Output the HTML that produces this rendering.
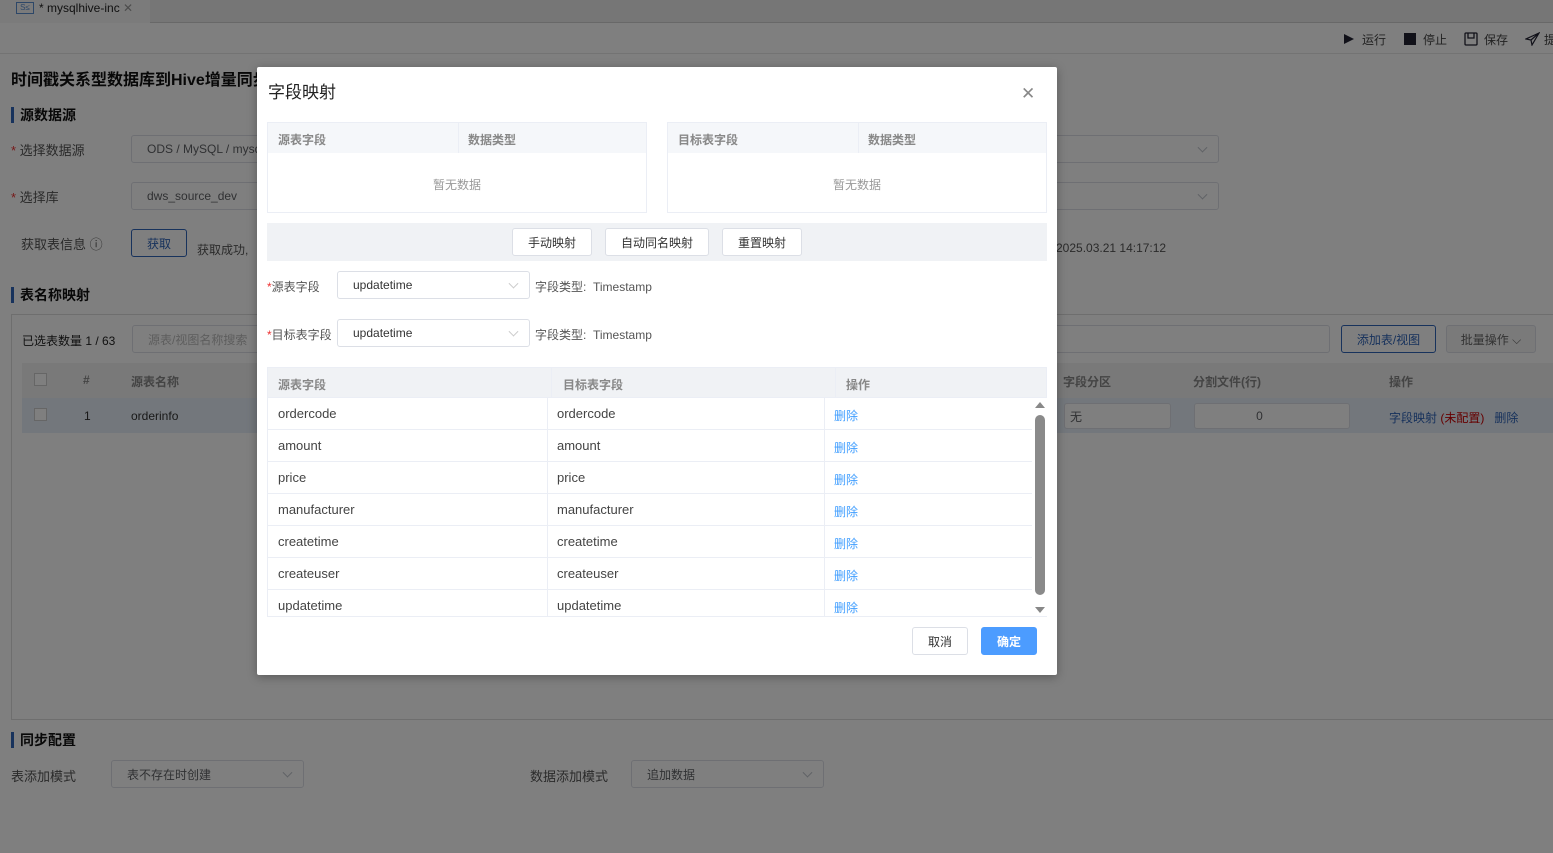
<!DOCTYPE html>
<html><head><meta charset="utf-8"><style>
*{box-sizing:border-box;margin:0;padding:0}
body{width:1553px;height:853px;overflow:hidden;position:relative;background:#fff;font-family:"Liberation Sans","Noto Sans CJK SC",sans-serif;font-size:13px;color:#333}
.a{position:absolute}
.inp{position:absolute;border:1px solid #dcdfe6;border-radius:3px;background:#fff;font-size:12px;color:#606266;padding-left:15px;display:flex;align-items:center}
.chev{position:absolute;right:12px;top:50%;width:7px;height:7px;border-right:1px solid #c0c4cc;border-bottom:1px solid #c0c4cc;transform:translateY(-70%) rotate(45deg)}
.sec{position:absolute;left:11px;border-left:3px solid #2f64b8;padding-left:6px;font-weight:bold;font-size:14px;color:#111;line-height:16px}
.lbl{position:absolute;font-size:13px;color:#555}
.ov{position:absolute;left:0;top:0;width:1553px;height:853px;background:rgba(0,0,0,.5)}
.m{position:absolute;left:257px;top:67px;width:800px;height:608px;background:#fff;border-radius:2px;box-shadow:0 2px 10px rgba(0,0,0,.3)}
.hd{background:#f5f7fa;color:#888;font-weight:bold;font-size:12px}
.btn{position:absolute;border:1px solid #dcdfe6;background:#fff;border-radius:3px;font-size:12px;color:#333;display:flex;align-items:center;justify-content:center}
.row{position:absolute;left:10px;width:765px;height:32px;border-bottom:1px solid #ebeef5;font-size:13px;color:#444}
.row span{position:absolute;top:8px}
.del{color:#409eff;font-size:12px}
.tb{position:absolute;top:31px;font-size:12px;color:#444}
</style></head><body>
<div class="a" style="left:0;top:0;width:1553px;height:23px;background:#ececec;border-bottom:1px solid #d0d0d0"></div>
<div class="a" style="left:0;top:0;width:150px;height:23px;background:#f7f7f7"></div>
<div class="a" style="left:16px;top:2px;width:18px;height:12px;border:1px solid #5a8fd0;font-size:8px;color:#5a8fd0;line-height:10px;text-align:center">S≤</div>
<div class="a" style="left:39px;top:1px;font-size:12px;color:#222">* mysqlhive-inc <span style="color:#999">✕</span></div>
<div class="a" style="left:0;top:24px;width:1553px;height:30px;border-bottom:1px solid #e6e6e6"></div>
<div class="a" style="left:1344px;top:34px;width:0;height:0;border-top:5px solid transparent;border-bottom:5px solid transparent;border-left:10px solid #223"></div>
<div class="tb" style="left:1362px">运行</div>
<div class="a" style="left:1404px;top:33px;width:12px;height:12px;background:#223"></div>
<div class="tb" style="left:1423px">停止</div>
<svg class="a" style="left:1464px;top:32px" width="14" height="14" viewBox="0 0 14 14"><rect x="1" y="1" width="12" height="12" rx="1" fill="none" stroke="#223" stroke-width="1.3"/><path d="M4 1v5h6V1" fill="none" stroke="#223" stroke-width="1.3"/></svg>
<div class="tb" style="left:1484px">保存</div>
<svg class="a" style="left:1525px;top:32px" width="15" height="14" viewBox="0 0 15 14"><path d="M14 1L1 7l5 1 1 5z M6 8l8-7" fill="none" stroke="#223" stroke-width="1.2"/></svg>
<div class="tb" style="left:1544px">提</div>
<div class="a" style="left:11px;top:66px;font-size:16px;font-weight:bold;color:#111">时间戳关系型数据库到Hive增量同步</div>
<div class="sec" style="top:107px">源数据源</div>
<div class="lbl" style="left:11px;top:140px"><span style="color:#e33">*</span> 选择数据源</div>
<div class="inp" style="left:131px;top:135px;width:1088px;height:28px">ODS / MySQL / mysql<i class="chev"></i></div>
<div class="lbl" style="left:11px;top:187px"><span style="color:#e33">*</span> 选择库</div>
<div class="inp" style="left:131px;top:182px;width:1088px;height:28px">dws_source_dev<i class="chev"></i></div>
<div class="lbl" style="left:21px;top:234px">获取表信息 ⓘ</div>
<div class="btn" style="left:131px;top:229px;width:56px;height:28px;border-color:#2f64b8;color:#2f64b8">获取</div>
<div class="lbl" style="left:197px;top:241px;font-size:12px">获取成功,</div>
<div class="lbl" style="left:1056px;top:241px;font-size:12px">2025.03.21 14:17:12</div>
<div class="sec" style="top:287px">表名称映射</div>
<div class="a" style="left:11px;top:314px;width:1560px;height:406px;border:1px solid #ddd"></div>
<div class="lbl" style="left:22px;top:332px;font-size:12px;color:#222">已选表数量 1 / 63</div>
<div class="inp" style="left:132px;top:325px;width:1198px;height:28px;color:#bbb">源表/视图名称搜索</div>
<div class="btn" style="left:1341px;top:325px;width:95px;height:28px;border-color:#2f64b8;color:#2f64b8">添加表/视图</div>
<div class="btn" style="left:1446px;top:325px;width:90px;height:28px;color:#666;background:#f5f5f5">批量操作 ⌵</div>
<div class="a hd" style="left:22px;top:363px;width:1540px;height:35px;background:#f2f2f2"></div>
<div class="a" style="left:22px;top:398px;width:1540px;height:35px;background:#e6eef8"></div>
<div class="a" style="left:34px;top:373px;width:13px;height:13px;border:1px solid #ccc;background:#fff"></div>
<div class="a" style="left:34px;top:408px;width:13px;height:13px;border:1px solid #ccc;background:#fff"></div>
<div class="a hd" style="left:83px;top:373px;background:none">#</div>
<div class="a hd" style="left:131px;top:373px;background:none">源表名称</div>
<div class="a" style="left:84px;top:409px;font-size:12px">1</div>
<div class="a" style="left:131px;top:409px;font-size:12px">orderinfo</div>
<div class="a hd" style="left:1063px;top:373px;background:none">字段分区</div>
<div class="a hd" style="left:1193px;top:373px;background:none">分割文件(行)</div>
<div class="a hd" style="left:1389px;top:373px;background:none">操作</div>
<div class="inp" style="left:1064px;top:403px;width:107px;height:26px;padding-left:5px">无</div>
<div class="inp" style="left:1194px;top:403px;width:156px;height:26px;justify-content:center;padding:0 25px 0 0">0</div>
<div class="a" style="left:1389px;top:409px;font-size:12px;color:#2f64b8">字段映射 <span style="color:#c00">(未配置)</span> &nbsp; 删除</div>
<div class="sec" style="top:732px">同步配置</div>
<div class="lbl" style="left:11px;top:766px">表添加模式</div>
<div class="inp" style="left:111px;top:760px;width:193px;height:28px">表不存在时创建<i class="chev"></i></div>
<div class="lbl" style="left:530px;top:766px">数据添加模式</div>
<div class="inp" style="left:631px;top:760px;width:193px;height:28px">追加数据<i class="chev"></i></div>
<div class="ov"></div>
<div class="m">
<div class="a" style="left:11px;top:11px;font-size:17px;color:#222">字段映射</div>
<div class="a" style="left:764px;top:17px;font-size:17px;color:#888">✕</div>
<div class="a" style="left:10px;top:55px;width:380px;height:91px;border:1px solid #ebeef5">
 <div class="hd" style="height:30px;position:relative"><span class="a" style="left:10px;top:8px">源表字段</span><span class="a" style="left:190px;top:0;height:30px;border-left:1px solid #ebeef5"></span><span class="a" style="left:200px;top:8px">数据类型</span></div>
 <div style="text-align:center;color:#999;font-size:12px;margin-top:23px">暂无数据</div></div>
<div class="a" style="left:410px;top:55px;width:380px;height:91px;border:1px solid #ebeef5">
 <div class="hd" style="height:30px;position:relative"><span class="a" style="left:10px;top:8px">目标表字段</span><span class="a" style="left:190px;top:0;height:30px;border-left:1px solid #ebeef5"></span><span class="a" style="left:200px;top:8px">数据类型</span></div>
 <div style="text-align:center;color:#999;font-size:12px;margin-top:23px">暂无数据</div></div>
<div class="a" style="left:10px;top:156px;width:780px;height:38px;background:#f0f2f5"></div>
<div class="btn" style="left:255px;top:161px;width:80px;height:28px">手动映射</div>
<div class="btn" style="left:348px;top:161px;width:104px;height:28px">自动同名映射</div>
<div class="btn" style="left:465px;top:161px;width:80px;height:28px">重置映射</div>
<div class="a" style="left:10px;top:211px;font-size:12px;color:#555"><span style="color:#e33">*</span>源表字段</div>
<div class="inp" style="left:80px;top:204px;width:193px;height:28px;color:#333">updatetime<i class="chev" style="border-color:#ccc"></i></div>
<div class="a" style="left:278px;top:211px;font-size:12px;color:#555">字段类型: &nbsp;Timestamp</div>
<div class="a" style="left:10px;top:259px;font-size:12px;color:#555"><span style="color:#e33">*</span>目标表字段</div>
<div class="inp" style="left:80px;top:252px;width:193px;height:28px;color:#333">updatetime<i class="chev" style="border-color:#ccc"></i></div>
<div class="a" style="left:278px;top:259px;font-size:12px;color:#555">字段类型: &nbsp;Timestamp</div>
<div class="a hd" style="left:10px;top:300px;width:780px;height:31px;border:1px solid #ebeef5;background:#f0f2f5">
 <span class="a" style="left:10px;top:8px">源表字段</span><span class="a" style="left:283px;top:0;height:30px;border-left:1px solid #ebeef5"></span>
 <span class="a" style="left:295px;top:8px">目标表字段</span><span class="a" style="left:567px;top:0;height:30px;border-left:1px solid #ebeef5"></span>
 <span class="a" style="left:578px;top:8px">操作</span></div>
<div class="a" style="left:10px;top:331px;width:780px;height:219px;overflow:hidden;border-left:1px solid #ebeef5;border-right:1px solid #ebeef5;border-bottom:1px solid #ebeef5">
 <div class="a" style="left:279px;top:0;height:219px;border-left:1px solid #ebeef5"></div>
 <div class="a" style="left:556px;top:0;height:219px;border-left:1px solid #ebeef5"></div>
</div>
<div class="row" style="top:331px"><span style="left:11px">ordercode</span><span style="left:290px">ordercode</span><span class="del" style="left:567px;top:9px">删除</span></div>
<div class="row" style="top:363px"><span style="left:11px">amount</span><span style="left:290px">amount</span><span class="del" style="left:567px;top:9px">删除</span></div>
<div class="row" style="top:395px"><span style="left:11px">price</span><span style="left:290px">price</span><span class="del" style="left:567px;top:9px">删除</span></div>
<div class="row" style="top:427px"><span style="left:11px">manufacturer</span><span style="left:290px">manufacturer</span><span class="del" style="left:567px;top:9px">删除</span></div>
<div class="row" style="top:459px"><span style="left:11px">createtime</span><span style="left:290px">createtime</span><span class="del" style="left:567px;top:9px">删除</span></div>
<div class="row" style="top:491px"><span style="left:11px">createuser</span><span style="left:290px">createuser</span><span class="del" style="left:567px;top:9px">删除</span></div>
<div class="row" style="top:523px;height:26px;overflow:hidden;border:none"><span style="left:11px">updatetime</span><span style="left:290px">updatetime</span><span class="del" style="left:567px;top:9px">删除</span></div>
<div class="a" style="left:776px;top:331px;width:14px;height:218px;background:#fff"></div>
<div class="a" style="left:778px;top:335px;width:0;height:0;border-left:5px solid transparent;border-right:5px solid transparent;border-bottom:6px solid #888"></div>
<div class="a" style="left:778px;top:348px;width:10px;height:180px;border-radius:5px;background:#8a8a8a"></div>
<div class="a" style="left:778px;top:540px;width:0;height:0;border-left:5px solid transparent;border-right:5px solid transparent;border-top:6px solid #888"></div>
<div class="btn" style="left:655px;top:560px;width:56px;height:28px">取消</div>
<div class="btn" style="left:724px;top:560px;width:56px;height:28px;background:#4c9cff;border-color:#4c9cff;color:#fff;font-weight:bold">确定</div>
</div>
</body></html>
